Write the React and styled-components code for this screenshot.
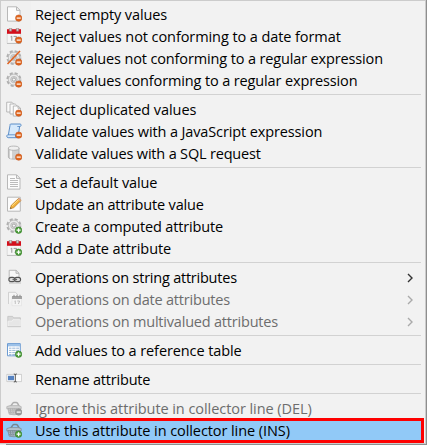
import React from 'react';
import styled, { createGlobalStyle } from 'styled-components';

const GlobalStyle = createGlobalStyle`
  body {
    margin: 0;
    background: linear-gradient(90deg, #e8e8e8 6px, #8e8e8e 6px);
    overflow: hidden;
  }
`;

const Menu = styled.div`
  box-sizing: border-box;
  width: 426px;
  height: 444px;
  padding: 3px 3px 1px 0;
  border: 1px solid #ccc;
  background: linear-gradient(90deg, #f0f0f0 30px, #f2f2f2 30px);
  font-family: 'Open Sans', 'Noto Sans', sans-serif;
  font-size: 14.5px;
  color: #000;
`;

const Row = styled.div`
  position: relative;
  display: flex;
  align-items: flex-start;
  height: 22px;
  padding-left: 5px;
  color: ${(p) => (p.$disabled ? '#6d6d6d' : '#000')};
  background: ${(p) => (p.$active ? '#91c9f7' : 'transparent')};
`;

const Highlight = styled.div`
  position: absolute;
  inset: -2px -2px -1px -1px;
  border: 3px solid #fe0000;
`;

const Glyph = styled.svg`
  flex: none;
  width: 16px;
  height: 16px;
  margin-top: 2px;
`;

const Label = styled.span`
  flex: 1;
  margin-left: 13px;
  line-height: 22px;
  white-space: nowrap;
  letter-spacing: ${(p) => p.$track}px;
`;

const Arrow = styled.svg`
  flex: none;
  width: 6px;
  height: 10px;
  margin: 6px 9px 0 0;
`;

const Separator = styled.div`
  height: 1px;
  margin: 2px 1px 4px 30px;
  background: #d2d2d2;
`;

const Minus = ({ gray }) => (
  <g>
    <circle cx="12.7" cy="12.1" r="3.2" fill={gray ? '#999' : '#e0671f'} stroke={gray ? '#888' : '#c04a10'} strokeWidth=".5" />
    <path d="M10.7 12.1h4" stroke="#fff" strokeWidth="1.2" />
  </g>
);
const Plus = () => (
  <g>
    <circle cx="12.6" cy="12.2" r="3.2" fill="#4f9f3b" stroke="#2f7e25" strokeWidth=".6" />
    <path d="M10.6 12.2h4M12.6 10.2v4" stroke="#fff" strokeWidth="1.2" />
  </g>
);
const Page = () => (
  <path d="M1.5.8h9.2l3.3 3.4v10.9H1.5zM10.5 1v3.4H14" fill="#fcfcfc" stroke="#b8b8b8" />
);
const Calendar = () => (
  <g>
    <path d="M1.2 4h13.4v11.3H1.2z" fill="#f6f6f6" stroke="#ccc" strokeWidth=".6" />
    <path d="M1 1.2h14v4.6H1z" fill="#d40f1b" />
    <path d="M3.3.2h2.4v3H3.3zM10.3.2h2.4v3h-2.4z" fill="#cfcfcf" stroke="#8d6060" strokeWidth=".5" />
    <path d="M4.6 8.8l1.2-.6v4.6M7.6 8.4h3l-1.7 4.4" fill="none" stroke="#8c8c8c" strokeWidth=".9" />
    <path d="M1 15.5h14" stroke="#aaa" strokeWidth=".6" />
  </g>
);
const Gear = () => (
  <g>
    <circle cx="7.9" cy="7.6" r="6.5" fill="none" stroke="#b0b0b0" strokeWidth="2" strokeDasharray="3.1 2.005" />
    <circle cx="7.9" cy="7.6" r="5.5" fill="#ebebeb" stroke="#b4b4b4" strokeWidth=".8" />
    <circle cx="7.9" cy="7.6" r="3.2" fill="#dadada" stroke="#b0b0b0" strokeWidth=".7" />
    <circle cx="7.9" cy="7.6" r="1.6" fill="#f7f7f7" stroke="#959595" strokeWidth=".8" />
  </g>
);
const Basket = ({ gray }) => {
  const line = gray ? '#adadad' : '#788690';
  const fill = gray ? '#d2d2d2' : '#b3c3ce';
  return (
    <g>
      <path d="M4 7.2L6.8 3.2Q7.2 2.6 8 2.6h2.2q.8 0 1.3.6L13.6 7" fill="none" stroke={line} strokeWidth="1.5" />
      <path d="M.8 6.6L4 5.6h8.4l2.8 1v2.2H.8z" fill={fill} stroke={line} strokeWidth=".7" />
      <path d="M1.9 8.8h12.4L13 14.2q-5 1.2-9.8 0z" fill={fill} stroke={line} strokeWidth=".7" />
      <path d="M1.9 8.9h12.4M2.4 10.8h11.4M2.8 12.7h10.6" stroke={line} strokeWidth=".9" strokeDasharray="1.4 .6" />
      <path d="M4.3 9l.6 5.4M6.8 9l.2 5.6M9.2 9v5.6" stroke={line} strokeWidth=".8" />
    </g>
  );
};

const icons = {
  pageMinus: <><Page /><Minus /></>,
  calMinus: <><Calendar /><Minus /></>,
  gearSlash: <><Gear /><path d="M1.5 14L14 1" stroke="#df6220" strokeWidth="1.6" /><Minus /></>,
  gearMinus: <><Gear /><Minus /></>,
  pages: (
    <>
      <path d="M.7 1.2h5.2l1.8 1.9V11H.7z" fill="#fafafa" stroke="#a9a9a9" strokeWidth=".8" />
      <path d="M4 3h5.2L11 4.8V13H4z" fill="#fafafa" stroke="#a9a9a9" strokeWidth=".8" />
      <path d="M7.3 5h4.8l2.4 2.2v7.9H7.3zM12 5v2.3h2.5" fill="#fcfcfc" stroke="#a9a9a9" strokeWidth=".8" />
      <Minus />
    </>
  ),
  script: (
    <>
      <path d="M4.5 1h9.7c1.5.2 1 2.8-.6 2.5L12 14.7H2.2c-2-.1-1.8-3.1.2-3L4 2.5C4 1.8 4 1.3 4.5 1z" fill="#d6e9fb" stroke="#4d83c3" strokeWidth=".9" />
      <path d="M13.8 3.5h-2.5M2 11.8h7.5v2.6" fill="none" stroke="#4d83c3" strokeWidth=".8" />
      <Minus />
    </>
  ),
  database: (
    <>
      <path d="M2.4 3v9.2c0 2.6 10.6 2.6 10.6 0V3" fill="#d0d0d0" stroke="#aaa" strokeWidth=".8" />
      <path d="M5 4.5v9" stroke="#f5f5f5" strokeWidth="2" />
      <ellipse cx="7.7" cy="3.2" rx="5.3" ry="2.1" fill="#f0f0f0" stroke="#aaa" strokeWidth=".8" />
      <Minus />
    </>
  ),
  pageText: (
    <>
      <Page />
      <path d="M4 4.5h5M4 6.5h8M4 8.5h8M4 10.5h8M4 12.5h8" stroke="#aaa" strokeWidth=".8" />
    </>
  ),
  pencil: (
    <>
      <path d="M1.5 1.2h12.8v14H1.5z" fill="#fcfcfc" stroke="#b8b8b8" />
      <path d="M4.2 12.8l1.1-3.5 7.6-7.2 2.2 2.3-7.4 7.3z" fill="#f2b23d" stroke="#b77a23" strokeWidth=".7" />
      <path d="M6 9.8l7-6.6" stroke="#ffdf87" />
      <path d="M11.9 3l1.2-1.1 2 2.2-1.1 1.1z" fill="#dda493" />
      <path d="M4.2 12.8l.4-1.5 1 1z" fill="#444" />
    </>
  ),
  gearPlus: <><Gear /><Plus /></>,
  calPlus: <><Calendar /><Plus /></>,
  linked: (
    <>
      <path d="M3.2 12V1.3h6.9L13 4.2V12M10 1.3v3h3" fill="#f8f8f8" stroke="#aaa" strokeWidth=".8" />
      <rect x="2.9" y="8.4" width="6" height="4.2" rx="2.1" fill="#ddd" stroke="#555" strokeWidth="1.1" />
      <rect x="8.6" y="8.4" width="6" height="4.2" rx="2.1" fill="#ddd" stroke="#555" strokeWidth="1.1" />
      <path d="M6.5 10.5h4.6" stroke="#666" strokeWidth="1.3" />
      <path d="M3 14h12" stroke="#aaa" strokeWidth=".7" />
    </>
  ),
  calGray: (
    <>
      <path d="M2.5 13V1.3h7L12 4" fill="#f5f5f5" stroke="#c8c8c8" strokeWidth=".8" />
      <path d="M6 6h9.5v8.7H6z" fill="#f4f4f4" stroke="#ddd" strokeWidth=".5" />
      <path d="M6 5h10v3H6z" fill="#a3a3a3" />
      <path d="M8 3.8v2M11 3.8v2M14 3.8v2" stroke="#888" />
      <path d="M8.5 10.2l.8-.4V13M11.3 10h2.3l-1.2 3" fill="none" stroke="#aaa" strokeWidth=".7" />
    </>
  ),
  folder: (
    <>
      <path d="M1.8 13.4V3.4h4.8l1 1.4h6.8v8.6z" fill="#d9d9d9" stroke="#c2c2c2" strokeWidth=".8" />
      <path d="M2 13.2V8.2h4l1-1.5h7.3v6.5z" fill="#e6e6e6" stroke="#f6f6f6" strokeWidth=".7" />
      <path d="M1.6 13.7h13" stroke="#bbb" strokeWidth=".7" />
    </>
  ),
  table: (
    <>
      <path d="M1.5 1.6h12.8v12.2H1.5z" fill="#fff" stroke="#6c9bd2" />
      <path d="M2 2h12v2.4H2z" fill="#9cc1e8" />
      <path d="M3 6.2h10M3 8.4h10M3 10.6h10M3 12.6h8" stroke="#7da3cb" strokeWidth=".8" />
      <path d="M5.8 4.5v9M9.8 4.5v9" stroke="#fff" strokeWidth=".7" />
      <Plus />
    </>
  ),
  rename: (
    <>
      <path d="M.8 3.4h14.8v7.2H.8z" fill="#fbfbfb" stroke="#c4c4c4" strokeWidth=".8" />
      <path d="M2 4.8h6v4.4H2z" fill="#5683c2" />
      <path d="M7.8 3c1 0 1.5.3 1.5.8 0-.5.5-.8 1.5-.8M9.3 3.5v7M7.8 11c1 0 1.5-.3 1.5-.8 0 .5.5.8 1.5.8" fill="none" stroke="#444" strokeWidth=".9" />
    </>
  ),
  basketMinus: <><Basket gray /><Minus gray /></>,
  basketPlus: <><Basket /><Plus /></>,
};

const groups = [
  [
    { icon: 'pageMinus', text: 'Reject empty values', track: -0.12 },
    { icon: 'calMinus', text: 'Reject values not conforming to a date format', track: -0.08 },
    { icon: 'gearSlash', text: 'Reject values not conforming to a regular expression', track: -0.14 },
    { icon: 'gearMinus', text: 'Reject values conforming to a regular expression', track: -0.13 },
  ],
  [
    { icon: 'pages', text: 'Reject duplicated values', track: -0.05 },
    { icon: 'script', text: 'Validate values with a JavaScript expression', track: -0.12 },
    { icon: 'database', text: 'Validate values with a SQL request', track: -0.18 },
  ],
  [
    { icon: 'pageText', text: 'Set a default value', track: -0.1 },
    { icon: 'pencil', text: 'Update an attribute value', track: -0.17 },
    { icon: 'gearPlus', text: 'Create a computed attribute', track: -0.15 },
    { icon: 'calPlus', text: 'Add a Date attribute', track: -0.05 },
  ],
  [
    { icon: 'linked', text: 'Operations on string attributes', track: -0.23, submenu: true },
    { icon: 'calGray', text: 'Operations on date attributes', track: -0.2, submenu: true, disabled: true },
    { icon: 'folder', text: 'Operations on multivalued attributes', track: -0.2, submenu: true, disabled: true },
  ],
  [{ icon: 'table', text: 'Add values to a reference table', track: -0.1 }],
  [{ icon: 'rename', text: 'Rename attribute', track: -0.2 }],
  [
    { icon: 'basketMinus', text: 'Ignore this attribute in collector line (DEL)', track: -0.06, disabled: true },
    { icon: 'basketPlus', text: 'Use this attribute in collector line (INS)', track: -0.08, active: true },
  ],
];

export default function App() {
  return (
    <>
      <GlobalStyle />
      <Menu>
        {groups.map((items, g) => (
          <React.Fragment key={g}>
            {g > 0 && <Separator />}
            {items.map((item) => (
              <Row key={item.text} $disabled={item.disabled} $active={item.active}>
                <Glyph viewBox="0 0 16 16">{icons[item.icon]}</Glyph>
                <Label $track={item.track}>{item.text}</Label>
                {item.submenu && (
                  <Arrow viewBox="0 0 6 10">
                    <path d="M1 1l4 4-4 4" fill="none" stroke={item.disabled ? '#aaa' : '#333'} strokeWidth="1.4" />
                  </Arrow>
                )}
                {item.active && <Highlight />}
              </Row>
            ))}
          </React.Fragment>
        ))}
      </Menu>
    </>
  );
}
